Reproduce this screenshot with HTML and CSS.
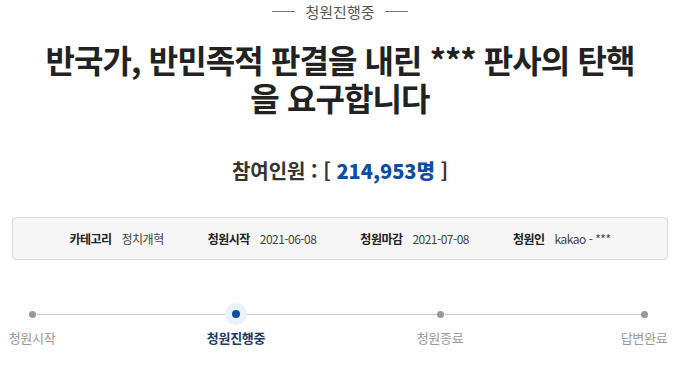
FILE: index.html
```html
<!DOCTYPE html>
<html lang="ko">
<head>
    <meta charset="UTF-8">
    <meta name="viewport" content="width=device-width, initial-scale=1.0">
    <title>청원 상세</title>
    <link rel="stylesheet" href="styles.css">
</head>
<body>
    <div class="petition">
        <p class="status">청원진행중</p>

        <h1 class="title">반국가, 반민족적 판결을 내린 *** 판사의 탄핵을 요구합니다</h1>

        <p class="count">참여인원 : [ <strong>214,953명</strong> ]</p>

        <ul class="info">
            <li><b>카테고리</b> 정치개혁</li>
            <li><b>청원시작</b> 2021-06-08</li>
            <li><b>청원마감</b> 2021-07-08</li>
            <li><b>청원인</b> kakao - ***</li>
        </ul>

        <ol class="steps">
            <li class="step"><span class="dot"></span>청원시작</li>
            <li class="step on"><span class="dot"></span>청원진행중</li>
            <li class="step"><span class="dot"></span>청원종료</li>
            <li class="step"><span class="dot"></span>답변완료</li>
        </ol>
    </div>
</body>
</html>
```

FILE: styles.css
```css
body {
    margin: 0;
    font-family: "Noto Sans CJK KR", "Noto Sans", sans-serif;
    color: #222;
    background: #fff;
}
.petition {
    width: 680px;
}
.status {
    margin: 0;
    height: 22px;
    display: flex;
    justify-content: center;
    align-items: center;
    gap: 10px;
    font-size: 15px;
    color: #555;
}
.status::before,
.status::after {
    content: "";
    width: 23px;
    height: 1px;
    background: #777;
}
.title {
    width: 610px;
    margin: 18px auto 0;
    text-align: center;
    font-size: 32px;
    line-height: 38px;
    font-weight: 700;
    letter-spacing: -0.9px;
    color: #222;
}
.count {
    margin: 41px 0 0;
    text-align: center;
    font-size: 20px;
    line-height: 28px;
    font-weight: 700;
    color: #333;
}
.count strong {
    color: #0b4ea2;
}
.info {
    list-style: none;
    margin: 32px 12px 0;
    padding: 0;
    height: 41px;
    display: flex;
    justify-content: center;
    align-items: center;
    gap: 44px;
    background: #f6f6f6;
    border: 1px solid #dcdcdc;
    border-radius: 4px;
    font-size: 12px;
    letter-spacing: -0.5px;
    color: #444;
}
.info b {
    color: #222;
    margin-right: 7px;
}
.steps {
    list-style: none;
    position: relative;
    margin: 43px 4px 0 0;
    padding: 0;
    display: flex;
    justify-content: space-between;
}
.steps::before {
    content: "";
    position: absolute;
    left: 32px;
    right: 32px;
    top: 11px;
    height: 1px;
    background: #cfcfcf;
}
.step {
    position: relative;
    width: 64px;
    display: flex;
    flex-direction: column;
    align-items: center;
    gap: 4px;
    font-size: 13px;
    line-height: 18px;
    letter-spacing: -0.3px;
    color: #999;
}
.dot {
    width: 22px;
    height: 22px;
    display: flex;
    align-items: center;
    justify-content: center;
    border-radius: 50%;
}
.dot::after {
    content: "";
    width: 7px;
    height: 7px;
    border-radius: 50%;
    background: #999;
}
.step.on {
    color: #1f3a66;
    font-weight: 700;
}
.step.on .dot {
    background: #eaf1fb;
}
.step.on .dot::after {
    width: 8px;
    height: 8px;
    background: #0b4ea2;
}
```
